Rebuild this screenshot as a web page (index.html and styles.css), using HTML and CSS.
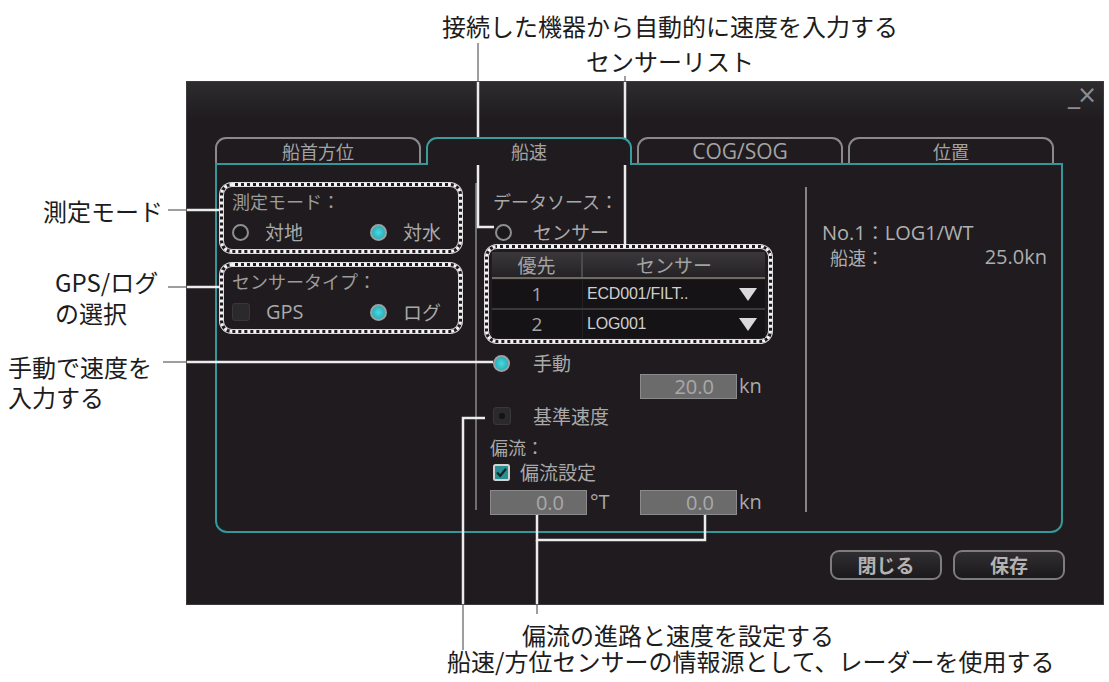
FILE: index.html
```html
<!DOCTYPE html>
<html lang="ja">
<head>
<meta charset="utf-8">
<title>船速</title>
<link rel="stylesheet" href="styles.css">
</head>
<body>
<div class="figure">
  <div class="dialog">
    <div class="titlebar"><span class="winctl">_×</span></div>
    <div class="tabs">
      <div class="tab">船首方位</div>
      <div class="tab active">船速</div>
      <div class="tab"><span class="lat tablat">COG/SOG</span></div>
      <div class="tab">位置</div>
    </div>
    <div class="panel">
      <div class="col-left">
        <div class="hl group">
          <div class="glabel">測定モード：</div>
          <div class="opts">
            <div class="opt"><span class="radio"></span><span>対地</span></div>
            <div class="opt"><span class="radio on"></span><span>対水</span></div>
          </div>
        </div>
        <div class="hl group">
          <div class="glabel">センサータイプ：</div>
          <div class="opts">
            <div class="opt"><span class="cb dark"></span><span class="lat">GPS</span></div>
            <div class="opt"><span class="radio on"></span><span>ログ</span></div>
          </div>
        </div>
      </div>
      <div class="sep sep1"></div>
      <div class="col-mid">
        <div class="src-label">データソース：</div>
        <div class="row src"><span class="radio"></span><span>センサー</span></div>
        <div class="hl tbl-hl">
          <div class="sh-row">
            <div class="sh c1">優先</div>
            <div class="sh c2">センサー</div>
          </div>
          <div class="s-row">
            <div class="sc c1 lat">1</div>
            <div class="sc c2"><span class="sname">ECD001/FILT..</span><span class="tri"></span></div>
          </div>
          <div class="s-row second">
            <div class="sc c1 lat">2</div>
            <div class="sc c2"><span class="sname">LOG001</span><span class="tri"></span></div>
          </div>
        </div>
        <div class="row manual"><span class="radio on"></span><span>手動</span></div>
        <div class="inrow speed">
          <div class="field lat">20.0</div><span class="unit lat">kn</span>
        </div>
        <div class="row base"><span class="cb dark dot"></span><span>基準速度</span></div>
        <div class="drift-label">偏流：</div>
        <div class="row drift"><span class="cb checked"><svg width="17" height="17" viewBox="0 0 17 17"><rect x="1" y="1" width="15" height="15" rx="1.5" fill="#2a8f92" stroke="#d2d2d2" stroke-width="2"/><polyline points="4,8.5 7.2,11.8 13,4.8" fill="none" stroke="#172224" stroke-width="2.2"/></svg></span><span>偏流設定</span></div>
        <div class="inrow drift-in">
          <div class="field lat">0.0</div><span class="unit deg lat">°T</span>
          <div class="field lat">0.0</div><span class="unit lat">kn</span>
        </div>
      </div>
      <div class="sep sep2"></div>
      <div class="col-right">
        <div class="r1"><span class="lat">No.1</span>：<span class="lat">LOG1/WT</span></div>
        <div class="r2"><span>船速：</span><span class="lat">25.0kn</span></div>
      </div>
    </div>
    <div class="buttons">
      <button class="btn">閉じる</button>
      <button class="btn">保存</button>
    </div>
  </div>

  <svg class="callouts" width="1109" height="682" viewBox="0 0 1109 682">
    <g stroke="#6a6a6a" stroke-width="1.3" fill="none">
      <line x1="478" y1="43" x2="478" y2="82"/>
      <line x1="625" y1="76" x2="625" y2="82"/>
      <line x1="168" y1="210" x2="187" y2="210"/>
      <line x1="168" y1="287" x2="187" y2="287"/>
      <line x1="163" y1="362" x2="187" y2="362"/>
      <line x1="463" y1="604" x2="463" y2="650"/>
      <line x1="537" y1="604" x2="537" y2="614"/>
    </g>
    <g stroke="#ececec" stroke-width="2.5" fill="none">
      <polyline points="478,82 478,227 494,227"/>
      <line x1="625" y1="82" x2="625" y2="245"/>
      <line x1="187" y1="210" x2="220" y2="210"/>
      <line x1="187" y1="287" x2="220" y2="287"/>
      <line x1="187" y1="362" x2="493" y2="362"/>
      <polyline points="485,418 463,418 463,604"/>
      <polyline points="537,515 537,540 705,540 705,515"/>
      <line x1="537" y1="540" x2="537" y2="604"/>
    </g>
  </svg>

  <div class="note note-top">接続した機器から自動的に速度を入力する<br>センサーリスト</div>
  <div class="note note-mode">測定モード</div>
  <div class="note note-gps">GPS/ログ<br>の選択</div>
  <div class="note note-manual">手動で速度を<br>入力する</div>
  <div class="note note-drift">偏流の進路と速度を設定する</div>
  <div class="note note-radar">船速/方位センサーの情報源として、レーダーを使用する</div>
</div>
</body>
</html>
```

FILE: styles.css
```css
* { box-sizing: border-box; }
html, body { margin: 0; padding: 0; background: #ffffff; }
body {
  width: 1109px;
  height: 682px;
  overflow: hidden;
  font-family: "Noto Sans CJK JP", "Noto Sans", sans-serif;
}
.figure {
  position: relative;
  width: 1109px;
  height: 682px;
  padding: 82px 0 0 187px;
}

/* dialog */
.dialog {
  width: 916px;
  height: 522px;
  background: #1f1b1f;
  color: #a9a9a9;
  display: flex;
  flex-direction: column;
  box-shadow: 0 0 0 1px #3c3a3c;
}
.lat { font-family: "Open Sans", "Noto Sans CJK JP", sans-serif; }

.titlebar {
  height: 55px;
  display: flex;
  justify-content: flex-end;
  align-items: flex-start;
  padding: 0 9px 0 0;
  background: linear-gradient(#2e2c2f, #1f1b1f 70%);
}
.winctl {
  font-family: "DejaVu Sans", sans-serif;
  font-size: 24px;
  line-height: 26px;
  color: #8e8e8e;
  letter-spacing: -3px;
}

/* tabs */
.tabs {
  display: flex;
  gap: 5px;
  margin-left: 28px;
  height: 26px;
  position: relative;
  z-index: 1;
}
.tab {
  width: 206px;
  height: 26px;
  border: 2px solid #8a8a8a;
  border-bottom: none;
  border-radius: 11px 11px 0 0;
  text-align: center;
  font-size: 18px;
  line-height: 24px;
  color: #a3a3a3;
}
.tab.active {
  height: 28px;
  border-color: #3a9c9d;
  background: #1f1b1f;
}
.tablat { font-size: 21px; }

/* panel */
.panel {
  margin-left: 28px;
  width: 848px;
  height: 370px;
  border: 2px solid #34979a;
  border-radius: 0 0 12px 12px;
  display: flex;
  align-items: flex-start;
  padding: 18px 0 0 3px;
}

/* highlight (dotted annotation frame) */
.hl {
  border: 3px dotted #f4f4f4;
  border-radius: 12px;
  box-shadow: 0 0 0 1px #dadada, inset 0 0 0 1px #dadada;
}

/* left column */
.col-left { width: 242px; }
.group {
  width: 242px;
  height: 70px;
  padding: 4px 0 0 9px;
  margin-bottom: 10px;
}
.glabel { font-size: 18px; line-height: 22px; color: #9c9c9c; }
.opts { display: flex; align-items: center; height: 24px; margin-top: 8px; }
.opt { display: flex; align-items: center; font-size: 19px; line-height: 24px; }
.opt:first-child { width: 138px; }
.opt .radio, .opt .cb { margin-right: 16px; }
.opt .lat { font-size: 20px; }

/* controls */
.radio {
  display: inline-block;
  width: 17px;
  height: 17px;
  border-radius: 50%;
  border: 2px solid #8e8e8e;
  background: #1a181a;
  flex: none;
}
.radio.on {
  background: radial-gradient(circle, #4fd6dc 0, #2cb8c2 60%, #229aa4 100%);
  border-color: #9aa2a3;
}
.cb {
  display: inline-block;
  width: 18px;
  height: 18px;
  flex: none;
}
.cb.dark {
  background: #2b292b;
  border: 1px solid #39373a;
  border-radius: 3px;
  position: relative;
}
.cb.dot::after {
  content: "";
  position: absolute;
  left: 5px;
  top: 5px;
  width: 6px;
  height: 6px;
  border-radius: 50%;
  background: #141214;
}
.cb.checked { width: 17px; height: 17px; }
.cb.checked svg { display: block; }

/* separators */
.sep { width: 2px; background: #858585; flex: none; }
.sep1 { margin-left: 13px; height: 327px; background: #6f6f6f; }
.sep2 { margin-left: 33px; margin-top: 4px; height: 325px; }

/* middle column */
.col-mid { margin-left: 8px; width: 287px; }
.src-label { margin-top: 7px; padding-left: 8px; font-size: 18px; line-height: 22px; }
.row {
  display: flex;
  align-items: center;
  height: 20px;
  font-size: 19px;
  line-height: 20px;
}
.row.src { margin-top: 10px; padding-left: 10px; }
.row.src .radio { margin-right: 21px; }
.row.manual { margin-top: 10px; padding-left: 8px; }
.row.manual .radio { margin-right: 23px; }
.row.base { margin-top: 8px; padding-left: 8px; }
.row.base .cb { margin-right: 22px; }
.drift-label { margin-top: 11px; padding-left: 5px; font-size: 18px; line-height: 20px; }
.row.drift { margin-top: 5px; padding-left: 8px; }
.row.drift .cb { margin-right: 10px; }

/* sensor table */
.tbl-hl {
  margin-top: 3px;
  width: 287px;
  height: 98px;
  padding: 4px 4px 0 4px;
}
.sh-row {
  display: flex;
  height: 27px;
  border-bottom: 2px solid #6e6c5e;
  background: linear-gradient(#3a383b, #242225);
}
.sh { font-size: 19px; line-height: 25px; text-align: center; color: #a2a2a2; }
.sh.c1 { width: 91px; border-right: 2px solid #4c4b4c; }
.sh.c2 { flex: 1; }
.s-row {
  display: flex;
  height: 28px;
  margin-top: 1px;
  background: #151315;
}
.s-row.second { margin-top: 2px; box-shadow: 0 -2px 0 #3a393a; }
.sc.c1 {
  width: 91px;
  text-align: center;
  font-size: 19px;
  line-height: 28px;
  color: #a5a5a5;
  border-right: 1px solid #232123;
}
.sc.c2 {
  flex: 1;
  display: flex;
  align-items: center;
  justify-content: space-between;
  padding: 0 8px 0 4px;
}
.sname {
  font-family: "Liberation Sans", Arial, sans-serif;
  font-size: 16px;
  color: #cfcfcf;
  letter-spacing: -0.2px;
}
.tri {
  width: 0;
  height: 0;
  border-left: 9px solid transparent;
  border-right: 9px solid transparent;
  border-top: 13px solid #dadada;
}

/* input fields */
.inrow { display: flex; align-items: center; height: 24px; }
.inrow.speed { margin-top: 1px; padding-left: 155px; }
.inrow.drift-in { margin-top: 8px; padding-left: 5px; }
.field {
  width: 97px;
  height: 25px;
  background: #6c6b6c;
  border: 1px solid #8c8b8c;
  color: #a9a9a9;
  font-size: 20px;
  line-height: 23px;
  text-align: right;
  padding-right: 22px;
}
.unit { font-size: 20px; line-height: 24px; margin-left: 2px; color: #a9a9a9; }
.unit.deg { width: 53px; margin-left: 0; padding-left: 3px; }

/* right column */
.col-right { margin-left: 15px; width: 225px; padding-top: 37px; }
.r1 { font-size: 19px; line-height: 24px; color: #b0b0b0; }
.r1 .lat { font-size: 20px; }
.r2 {
  display: flex;
  justify-content: space-between;
  padding-left: 8px;
  font-size: 18px;
  line-height: 24px;
  color: #adadad;
}
.r2 .lat { font-size: 20px; }

/* buttons */
.buttons {
  display: flex;
  justify-content: flex-end;
  gap: 11px;
  margin-top: 17px;
  padding-right: 38px;
}
.btn {
  width: 112px;
  height: 30px;
  border: 2px solid #7d7d7d;
  border-radius: 9px;
  background: linear-gradient(#302e31, #1b191b);
  color: #b3b3b3;
  font-family: "Noto Sans CJK JP", sans-serif;
  font-size: 19px;
  font-weight: 700;
  line-height: 26px;
  padding: 0;
  text-align: center;
}

/* callouts overlay */
.callouts {
  position: absolute;
  left: 0;
  top: 0;
  pointer-events: none;
}
.note {
  position: absolute;
  color: #1c1c1c;
  font-size: 24px;
  white-space: nowrap;
}
.note-top { left: 420px; top: 8px; width: 500px; text-align: center; line-height: 35px; }
.note-mode { left: 43px; top: 196px; line-height: 30px; }
.note-gps { left: 55px; top: 266px; line-height: 31px; }
.note-manual { left: 8px; top: 352px; line-height: 30px; }
.note-drift { left: 522px; top: 622px; line-height: 26px; }
.note-radar { left: 447px; top: 648px; line-height: 26px; }
```
